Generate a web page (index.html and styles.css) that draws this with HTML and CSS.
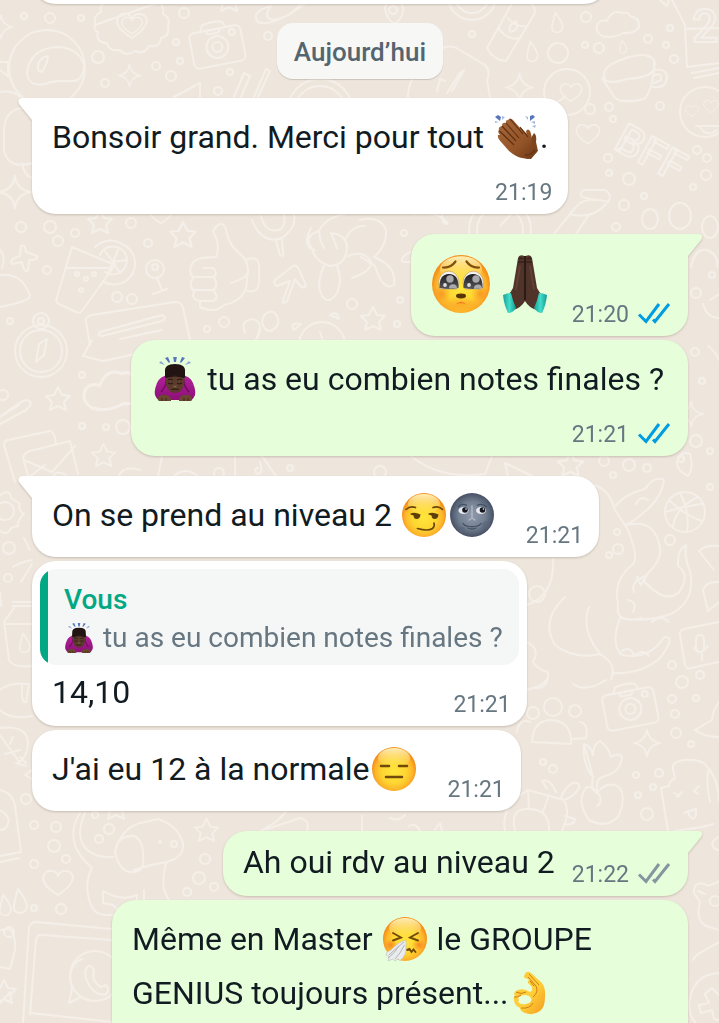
FILE: index.html
```html
<!DOCTYPE html>
<html lang="fr">
<head>
<meta charset="utf-8">
<meta name="viewport" content="width=device-width, initial-scale=1">
<title>Discussion</title>
<link rel="stylesheet" href="styles.css">
</head>
<body>
<svg class="sprite" aria-hidden="true">
  <defs>
    <radialGradient id="gFace" cx=".5" cy=".55" r=".5">
      <stop offset="0" stop-color="#ffe63d"/><stop offset=".55" stop-color="#fed631"/><stop offset=".85" stop-color="#fdb52a"/><stop offset="1" stop-color="#f4911c"/>
    </radialGradient>
    <linearGradient id="gShine" x1="0" y1="0" x2="0" y2="1">
      <stop offset="0" stop-color="#fff6c4" stop-opacity=".95"/><stop offset="1" stop-color="#ffe870" stop-opacity="0"/>
    </linearGradient>
    <radialGradient id="gMoon" cx=".5" cy=".5" r=".5">
      <stop offset="0" stop-color="#909bac"/><stop offset=".6" stop-color="#748193"/><stop offset="1" stop-color="#465064"/>
    </radialGradient>
    <radialGradient id="gBlush"><stop offset="0" stop-color="#f5741c" stop-opacity=".75"/><stop offset="1" stop-color="#f5741c" stop-opacity="0"/></radialGradient>
    <linearGradient id="gHand" x1="0" y1="0" x2="1" y2="1"><stop offset="0" stop-color="#ffc83b"/><stop offset=".55" stop-color="#ffcf3a"/><stop offset="1" stop-color="#f39a1c"/></linearGradient>
    <linearGradient id="gClap" x1="0" y1="0" x2="1" y2="1"><stop offset="0" stop-color="#a5673a"/><stop offset=".6" stop-color="#945428"/><stop offset="1" stop-color="#6b3614"/></linearGradient>
    <linearGradient id="gCuff" x1="0" y1="0" x2="1" y2="0"><stop offset="0" stop-color="#17a196"/><stop offset=".5" stop-color="#43dccb"/><stop offset="1" stop-color="#129b90"/></linearGradient>
    <linearGradient id="gEye" x1="0" y1="0" x2="0" y2="1"><stop offset="0" stop-color="#1e1c1d"/><stop offset="1" stop-color="#57565a"/></linearGradient>
    <linearGradient id="gShirt" x1="0" y1="0" x2="0" y2="1"><stop offset="0" stop-color="#b3219b"/><stop offset="1" stop-color="#8c1078"/></linearGradient>
  </defs>

  <symbol id="e-base" viewBox="0 0 44 44">
    <circle cx="22" cy="22" r="22" fill="url(#gFace)"/>
    <ellipse cx="22" cy="11" rx="16" ry="10" fill="url(#gShine)"/>
  </symbol>

  <symbol id="e-smirk" viewBox="0 0 44 44">
    <use href="#e-base" width="44" height="44"/>
    <g fill="none" stroke="#6a4608" stroke-width="1.7" stroke-linecap="round">
      <path d="M4 16.5Q8 12.500 13.500 14.500M31 14.500Q36.500 12.500 40.500 16.500"/>
      <path d="M15.500 35.500Q26 38.500 30.500 35.500Q33 33.500 32 30"/>
    </g>
    <g fill="#5d3f0a"><path d="M8.500 20.500Q13 18.800 18.500 21.500Q18 26 14.500 26Q12 26 11.500 22.500Q10 22 8.500 21.500Z"/><path d="M26.500 20.500Q31 18.800 36.500 21.500Q36 26 32.500 26Q30 26 29.500 22.500Q28 22 26.500 21.500Z"/></g>
  </symbol>

  <symbol id="e-moon" viewBox="0 0 44 44">
    <circle cx="22" cy="22" r="22" fill="url(#gMoon)"/>
    <g fill="#5a667a" opacity=".55"><circle cx="9" cy="11" r="3"/><circle cx="34" cy="8" r="2.500"/><circle cx="36" cy="32" r="4"/><circle cx="12" cy="37" r="3"/></g>
    <path d="M8 14Q12 9.500 17 12.500M27 12.500Q32 9.500 37 14" fill="none" stroke="#435064" stroke-width="1.300"/>
    <ellipse cx="13.500" cy="17.500" rx="5" ry="3.500" fill="#e6eaef"/><ellipse cx="31" cy="17.500" rx="5" ry="3.500" fill="#e6eaef"/>
    <circle cx="15" cy="17" r="2.800" fill="#141720"/><circle cx="32.500" cy="17" r="2.800" fill="#141720"/>
    <circle cx="16" cy="16" r=".8" fill="#fff"/><circle cx="33.500" cy="16" r=".8" fill="#fff"/>
    <path d="M22 13V25M19 27Q22 24 25 27" fill="none" stroke="#b4bdca" stroke-width="1.600" stroke-linecap="round" opacity=".8"/>
    <path d="M13 30.500Q15 33 17 33Q22 34.500 27 33Q29 33 31 30.500M18 35Q22 37 26 35" fill="none" stroke="#465266" stroke-width="1.300" stroke-linecap="round"/>
  </symbol>

  <symbol id="e-flat" viewBox="0 0 44 44">
    <use href="#e-base" width="44" height="44"/>
    <path d="M9 19H17M27 19H35M14 30H30" fill="none" stroke="#70490b" stroke-width="2.600" stroke-linecap="round"/>
  </symbol>

  <symbol id="e-sneeze" viewBox="0 0 44 44">
    <use href="#e-base" width="44" height="44"/>
    <ellipse cx="36" cy="28" rx="7" ry="6" fill="url(#gBlush)"/><ellipse cx="8" cy="28" rx="7" ry="6" fill="url(#gBlush)"/>
    <path d="M10 16L18 20.500L10 23.500M35 16L27 20.500L35 23.500M24 33L26.500 32L28.500 35L30.500 32.500L32.500 35" fill="none" stroke="#70490b" stroke-width="1.900" stroke-linecap="round"/>
    <path d="M22.500 23Q23.500 25 23 30Q24 38 17 43.500L15 42L12 44L10 42L5 44L6 40L3 38L4 35Q8 34 11 30Q16 25 22.500 23Z" fill="#e9ebec" stroke="#bcbfc1" stroke-width=".6"/>
    <path d="M21 25Q13 31 6 38M21.500 28Q17 37 12 42M16 29Q12 36 5 41" fill="none" stroke="#b3b6b8" stroke-width="1"/>
  </symbol>

  <symbol id="e-plead" viewBox="0 0 60 60">
    <use href="#e-base" x="1" y="1" width="58" height="58"/>
    <ellipse cx="30" cy="50" rx="23" ry="8" fill="url(#gBlush)" opacity=".5"/><ellipse cx="11" cy="40" rx="9" ry="9" fill="url(#gBlush)" opacity=".7"/><ellipse cx="49" cy="40" rx="9" ry="9" fill="url(#gBlush)" opacity=".7"/>
    <path d="M12 13.500Q20 14 24.500 7.500M35.500 7.500Q40 14 48 13.500" fill="none" stroke="#80510c" stroke-width="2.200" stroke-linecap="round"/>
    <path d="M7.500 28A10.300 12 0 0 1 28 28Q28 32 25.500 35H9Q7.500 32 7.500 28Z" fill="#f2f1f3" stroke="#b99a5e" stroke-width=".6"/>
    <path d="M32 28A10.300 12 0 0 1 52.500 28Q52.500 32 51 35H34.500Q32 33 32 28Z" fill="#f2f1f3" stroke="#b99a5e" stroke-width=".6"/>
    <path d="M8.500 34Q8 20 18 20Q28 20 27.500 34Q18 36 8.500 34Z" fill="url(#gEye)"/><path d="M32.500 34Q32 20 42 20Q52 20 51.500 34Q42 36 32.500 34Z" fill="url(#gEye)"/>
    <g fill="#a9a9ad"><circle cx="19" cy="25" r="3.700"/><circle cx="45" cy="25" r="3.700"/><path d="M18 34.500A4 4 0 0 1 26 34ZM43 35A4 4 0 0 1 51 34Z"/></g>
    <circle cx="14" cy="31" r="1.900" fill="#ddd"/><circle cx="38" cy="31" r="1.900" fill="#ddd"/>
    <ellipse cx="30" cy="42" rx="5" ry="2.400" fill="#593504"/><path d="M24.500 50.500Q30 45 35.500 50.500Q30 48 24.500 50.500Z" fill="#f07820"/>
  </symbol>

  <symbol id="e-pray" viewBox="0 0 60 60">
    <path d="M29.500 2Q24 0 23 4L18 34Q16 38 13 41L18 56Q26 54 30 47Q34 54 42 56L47 41Q44 38 42 34L37 4Q36 0 30.500 2Z" fill="#50342a"/>
    <path d="M24 5Q26 3 28 5M32 5Q34 3 36 5M23 8H29M31 8H37" stroke="#2b1914" stroke-width="1" fill="none"/>
    <path d="M30 2V46" stroke="#24140f" stroke-width="1.600" fill="none"/>
    <path d="M25 12L21 36M35 12L39 36" stroke="#6b4a3a" stroke-width="2" opacity=".6"/>
    <path d="M8 41Q12 39 16 39Q18 48 21 54Q18 59 13 59Q9 51 8 41Z" fill="url(#gCuff)"/><path d="M52 41Q48 39 44 39Q42 48 39 54Q42 59 47 59Q51 51 52 41Z" fill="url(#gCuff)"/>
  </symbol>

  <symbol id="e-clap" viewBox="0 0 44 44">
    <path d="M24 16Q24 12 27 13L37 23L40 18Q43 20 42 27L44 36L34 44Q28 43 22 37Z" fill="#7d451e"/>
    <path d="M5 15Q3 17 6 20L4 20Q3 23 8 28L15 36Q22 42 28 43L37 44L43 37L38 29Q38 20 36 16Q34 13 32 16L33 21L19 5Q16 2 14 5Q11 5 12 8Q8 7 8 11Q4 12 5 15Z" fill="url(#gClap)"/>
    <path d="M12 8L25 23M8 11L22 26M5.500 16L20 30M16 4L29 19M26 12L34 22M31 40Q36 41 41 35" fill="none" stroke="#5e2f10" stroke-width="1.100"/>
    <path d="M1 1L6 5L7 1L4-1ZM41 1L36 5L36 0L39-1Z" fill="#5876bd" transform="translate(0 1)"/>
    <path d="M8 1L8 5L11 2ZM1 8L5 7L1 6ZM31 1L34 5L34 2ZM37 7L41 9L41 6ZM38 11L41 13L42 10Z" fill="#a7b9df"/>
  </symbol>

  <symbol id="e-bow" viewBox="0 0 44 44">
    <path d="M3 40Q0 36 4 26Q7 19 15 18H29Q37 19 40 26Q44 36 41 40Q39 44 35 43H9Q5 44 3 40Z" fill="url(#gShirt)"/>
    <path d="M8 35Q14 28 13 23M36 35Q30 28 31 23" stroke="#74095f" stroke-width="1.500" fill="none"/>
    <path d="M12 15Q11 7 22 7Q33 7 32 15V21H12Z" fill="#211412"/>
    <path d="M12.500 20Q22 17 31.500 20Q32 35 22 36Q12 35 12.500 20Z" fill="#5b3b2b"/>
    <path d="M12 17Q22 20 32 17L31 21Q22 18 13 21Z" fill="#211412"/>
    <path d="M15 22.500Q18 21.500 20 23M24 23Q26 21.500 29 22.500M15 26Q18 28 20 26M24 26Q26 28 29 26M18.500 32.500Q22 31.500 25.500 32.500" stroke="#26130e" stroke-width="1" fill="none"/>
    <path d="M20.500 29.500H23.500" stroke="#8a624c" stroke-width="1.500"/>
    <path d="M5 43V41Q7 37 12 38Q17 38 18 42V44H6ZM39 43V41Q37 37 32 38Q27 38 26 42V44H38Z" fill="#6b4630"/>
    <path d="M9 41V44M13 41V44M31 41V44M35 41V44" stroke="#38211a" stroke-width=".8"/>
    <path d="M20-1H24L23 5H21ZM12 1L15 0L17 5L16 6ZM32 1L29 0L27 5L28 6Z" fill="#5575bd"/><path d="M6 6L8 4L12 8ZM38 6L36 4L32 8Z" fill="#8fa6d6"/>
  </symbol>

  <symbol id="e-ok" viewBox="0 0 44 44">
    <path d="M14 3Q16-1 20 2L30 11Q35 16 34 26Q34 36 29 40Q22 45 14 42Q9 40 9 37Q3 34 3 29Q2 27 4 25Q2 22 5 20Q9 17 15 19L19 21Q22 20 21 16L17 12Q16 9 19 9L14 7Q12 6 14 3Z" fill="url(#gHand)"/>
    <path d="M7 27Q12 22 18 25Q23 29 18 32Q11 35 7 31Q9 29 7 27Z" fill="#e6ffda"/>
    <path d="M17 6L25 15Q28 21 22 26M19 10L23 15M18 3L28 14M3 26Q6 27 10 24M5 21Q10 24 15 21M10 37Q19 38 22 32" fill="none" stroke="#cf7f11" stroke-width="1"/>
  </symbol>

  <symbol id="i-checks" viewBox="0 2 34 22" overflow="visible">
    <path d="M2 12.500L9 19.500L22 2M16 17.500L18 19.500L32 2" fill="none" stroke="currentColor" stroke-width="3"/>
  </symbol>

  <symbol id="d-star" viewBox="-14 -14 28 28"><path d="M0-12L4-4L12-3L6 3L8 11L0 7L-8 11L-6 3L-12-3L-4-4Z"/></symbol>
  <symbol id="d-spark" viewBox="-18 -18 36 36"><path d="M0-16Q2-2 16 0Q2 2 0 16Q-2 2-16 0Q-2-2 0-16Z"/></symbol>
  <symbol id="d-heart" viewBox="-18 -16 36 32"><path d="M0 13Q-15 4-15-4Q-13-13-5-11Q-1-10 0-6Q1-10 6-11Q14-12 15-4Q14 4 0 13Z"/></symbol>
  <symbol id="d-drop" viewBox="-8 -14 16 28"><path d="M-2-12Q7 0 7 5Q6 12 0 12Q-7 12-6 4Q-5-2-2-12Z"/></symbol>
  <symbol id="d-camera" viewBox="-30 -26 60 52"><g transform="rotate(-11)"><rect x="-26" y="-16" width="52" height="36" rx="5"/><path d="M-14-16L-11-22Q0-25 9-22L12-16"/><circle cy="2" r="11"/><circle cy="2" r="5"/><rect x="-8" y="-16" width="13" height="4" rx="2"/><circle cx="17" cy="-10" r="3"/></g></symbol>
  <symbol id="d-cloud" viewBox="-24 -16 48 32"><path d="M-16 12Q-24 7-20-1Q-16-5-11-3Q-6-15 4-11Q10-13 12-8Q22-6 21 3Q17 10 5 9Q-5 15-16 12Z"/></symbol>
</svg>

<main class="chat">
  <svg class="doodles" viewBox="0 0 719 1023" preserveAspectRatio="xMidYMin slice" aria-hidden="true">
    <!-- scattered dots -->
    <g>
      <circle cx="24" cy="16" r="3"/><circle cx="50" cy="18" r="5"/><circle cx="81" cy="18" r="3"/><circle cx="184" cy="13" r="5"/><circle cx="98" cy="57" r="6"/><circle cx="156" cy="66" r="4"/><circle cx="171" cy="76" r="5"/><circle cx="105" cy="83" r="4"/><circle cx="176" cy="42" r="3"/><circle cx="180" cy="61" r="3"/><circle cx="230" cy="72" r="3"/><circle cx="218" cy="91" r="4"/><circle cx="268" cy="36" r="4"/>
      <circle cx="21" cy="227" r="5"/><circle cx="50" cy="227" r="6"/><circle cx="75" cy="233" r="4"/><circle cx="58" cy="241" r="5"/><circle cx="131" cy="223" r="5"/><circle cx="148" cy="243" r="4"/><circle cx="47" cy="270" r="4"/><circle cx="117" cy="297" r="5"/><circle cx="132" cy="299" r="5"/><circle cx="207" cy="329" r="3"/><circle cx="224" cy="322" r="5"/><circle cx="352" cy="304" r="5"/><circle cx="10" cy="321" r="3"/>
      <circle cx="472" cy="34" r="3"/><circle cx="586" cy="17" r="5"/><circle cx="585" cy="45" r="3"/><circle cx="599" cy="48" r="5"/><circle cx="558" cy="53" r="10"/><circle cx="648" cy="39" r="4"/><circle cx="670" cy="28" r="3"/><circle cx="666" cy="45" r="3"/><circle cx="674" cy="59" r="4"/><circle cx="590" cy="109" r="5"/><circle cx="609" cy="107" r="4"/><circle cx="613" cy="119" r="3"/><circle cx="660" cy="106" r="4"/><circle cx="608" cy="158" r="4"/><circle cx="609" cy="173" r="3"/><circle cx="629" cy="179" r="6"/><circle cx="697" cy="150" r="4"/><circle cx="707" cy="158" r="4"/><circle cx="706" cy="175" r="5"/><circle cx="693" cy="187" r="3"/><circle cx="644" cy="196" r="3"/><circle cx="624" cy="205" r="5"/><circle cx="616" cy="227" r="4"/><circle cx="404" cy="233" r="3"/><circle cx="400" cy="300" r="3"/><circle cx="397" cy="324" r="3"/><circle cx="696" cy="293" r="5"/><circle cx="712" cy="275" r="3"/>
      <circle cx="82" cy="375" r="3"/><circle cx="3" cy="395" r="5"/><circle cx="82" cy="426" r="3"/><circle cx="106" cy="427" r="3"/><circle cx="123" cy="427" r="7"/><circle cx="9" cy="548" r="6"/><circle cx="8" cy="578" r="4"/><circle cx="219" cy="473" r="5"/><circle cx="290" cy="468" r="3"/><circle cx="380" cy="472" r="6"/>
      <circle cx="695" cy="352" r="4"/><circle cx="702" cy="381" r="3"/><circle cx="696" cy="441" r="6"/><circle cx="710" cy="451" r="3"/><circle cx="604" cy="461" r="5"/><circle cx="629" cy="465" r="6"/><circle cx="647" cy="468" r="4"/><circle cx="613" cy="475" r="3"/><circle cx="710" cy="487" r="3"/><circle cx="670" cy="540" r="5"/><circle cx="617" cy="532" r="3"/><circle cx="618" cy="549" r="5"/><circle cx="609" cy="555" r="3"/><circle cx="672" cy="665" r="4"/><circle cx="700" cy="675" r="4"/>
      <circle cx="26" cy="799" r="5"/><circle cx="34" cy="825" r="4"/><circle cx="56" cy="827" r="5"/><circle cx="54" cy="846" r="6"/><circle cx="66" cy="859" r="4"/><circle cx="34" cy="864" r="4"/><circle cx="95" cy="815" r="3"/><circle cx="109" cy="829" r="5"/><circle cx="99" cy="839" r="4"/><circle cx="205" cy="859" r="5"/><circle cx="199" cy="878" r="6"/><circle cx="214" cy="887" r="4"/><circle cx="187" cy="892" r="4"/><circle cx="34" cy="908" r="3"/><circle cx="61" cy="909" r="5"/>
      <circle cx="682" cy="682" r="6"/><circle cx="672" cy="699" r="4"/><circle cx="696" cy="698" r="3"/><circle cx="675" cy="714" r="4"/><circle cx="676" cy="733" r="5"/><circle cx="691" cy="744" r="3"/><circle cx="543" cy="762" r="3"/><circle cx="553" cy="769" r="4"/><circle cx="636" cy="775" r="3"/><circle cx="659" cy="773" r="4"/><circle cx="653" cy="787" r="3"/><circle cx="638" cy="795" r="3"/><circle cx="647" cy="814" r="6"/>
    </g>
    <!-- repeated motifs -->
    <use href="#d-star" x="86" y="208" width="28" height="28"/><use href="#d-star" x="168" y="220" width="30" height="30"/><use href="#d-star" x="44" y="385" width="28" height="28"/><use href="#d-star" x="90" y="442" width="27" height="27"/><use href="#d-star" x="556" y="450" width="29" height="29"/><use href="#d-star" x="359" y="305" width="28" height="28"/><use href="#d-star" x="193" y="817" width="27" height="27"/><use href="#d-star" x="-10" y="978" width="28" height="28"/><use href="#d-star" x="215" y="-14" width="28" height="28"/><use href="#d-star" x="102" y="794" width="28" height="28"/>
    <use href="#d-spark" x="117" y="63" width="25" height="25"/><use href="#d-spark" x="-3" y="174" width="36" height="36"/><use href="#d-spark" x="-12" y="14" width="26" height="26"/><use href="#d-spark" x="504" y="72" width="31" height="31"/><use href="#d-spark" x="632" y="728" width="30" height="30"/><use href="#d-spark" x="677" y="400" width="28" height="28"/>
    <use href="#d-heart" x="114" y="9" width="36" height="32"/><use href="#d-heart" x="119" y="14" width="26" height="22"/><use href="#d-heart" x="40" y="866" width="36" height="32"/><use href="#d-heart" x="574" y="121" width="28" height="25"/><use href="#d-heart" x="558" y="80" width="26" height="24"/><use href="#d-heart" x="145" y="198" width="32" height="28"/><use href="#d-heart" x="684" y="103" width="16" height="15"/><use href="#d-heart" x="702" y="98" width="18" height="16"/>
    <use href="#d-drop" x="550" y="11" width="14" height="23"/><use href="#d-drop" x="525" y="40" width="14" height="23"/><use href="#d-drop" x="618" y="39" width="10" height="15"/><use href="#d-drop" x="12" y="887" width="16" height="28"/><use href="#d-drop" x="-2" y="893" width="14" height="24"/><use href="#d-drop" x="18" y="632" width="13" height="22"/>
    <use href="#d-camera" x="187" y="19" width="60" height="52"/><use href="#d-camera" x="600" y="681" width="60" height="52"/>
    <use href="#d-cloud" x="594" y="8" width="48" height="32"/><use href="#d-cloud" x="80" y="360" width="72" height="60"/>
    <!-- top left -->
    <circle cx="47" cy="68" r="38"/><path d="M27 73Q30 48 58 47Q78 48 84 64Q84 82 70 81Q55 80 45 84Q28 87 27 73ZM38 70Q37 58 48 56Q48 62 42 72ZM0 92Q14 90 20 97M32 108Q5 105 4 130V150Q8 170 32 163M22 163Q24 176 32 178M0 62L8 62V76L0 70"/>
    <path d="M95 25Q93 15 101 12Q99 3 108 2M160 2Q164 7 163 14Q171 18 168 27Q170 36 161 38Q160 48 149 46Q144 55 135 51Q126 57 120 50Q109 52 107 43Q95 42 98 32Q93 30 95 25Z"/>
    <path d="M258 22Q250 12 271 6Q262 18 273 20Q295 16 302 0M258 22Q272 28 306 3M174 97L200 83V97M234 97L244 73L250 76L241 97M254 97L266 69L270 71L258 97"/>
    <circle cx="320" cy="112" r="33"/><circle cx="320" cy="112" r="26"/>
    <!-- second band, left -->
    <path d="M72 247L115 265L82 311Q80 314 76 312L57 303Q56 300 57 297ZM67 268H108M95 247Q108 235 124 245A21 21 0 0 1 104 282M100 255A14 14 0 1 1 105 272M113 262L105 251M113 262L118 250M113 262L126 260M113 262L120 273M113 262L108 274"/><circle cx="77" cy="274" r="2"/><circle cx="86" cy="279" r="2"/><circle cx="94" cy="274" r="2"/><circle cx="81" cy="290" r="2"/>
    <circle cx="155" cy="269" r="9"/><circle cx="155" cy="267" r="3"/><path d="M157 278L162 290M153 294L167 289M21 246Q25 243 26 252L37 256Q39 260 29 260L28 270Q24 274 22 262L12 264Q9 259 20 256ZM0 275Q22 272 30 296Q30 301 0 307M0 250Q6 256 2 268"/>
    <path d="M215 228Q223 219 226 230Q229 245 238 252Q251 262 247 278Q248 300 224 305Q215 314 200 307V301Q191 300 194 291Q188 286 193 278Q188 272 192 264Q195 257 216 257Q221 244 213 232ZM203 268H213Q219 274 213 277H194M214 277Q219 287 213 290H195M213 290Q220 298 213 301H201M231 283Q246 278 247 274M246 260Q258 255 259 265V282Q258 295 245 290"/>
    <path d="M252 220Q262 245 282 238Q297 228 294 214M261 216Q266 235 281 229Q286 223 284 214M276 241L280 255Q285 258 283 252L282 240M275 280L293 266Q297 264 299 270L306 285Q304 292 295 279L287 301Q282 305 283 300L290 281L277 286Q273 284 275 280Z"/>
    <path d="M319 231Q326 217 345 214M319 231Q303 236 312 248Q314 261 330 266Q347 265 347 246Q345 234 331 233M319 231Q320 242 324 248M331 233L337 248M324 266Q315 285 323 297Q329 305 337 293Q343 280 337 266M311 228Q301 247 315 250M348 256Q362 250 370 260Q375 270 352 278M345 240Q352 225 365 226"/>
    <path d="M86 322Q84 317 92 315L175 302Q182 302 183 308L190 340M86 322L90 345M100 332L162 315Q168 318 162 321L102 336Q97 336 100 332ZM120 339L162 330M245 333Q240 321 252 319Q264 321 258 337M262 322Q264 310 274 312Q284 324 271 331Q264 331 262 322Z"/><path d="M250 347Q258 340 260 328"/>
    <circle cx="322" cy="345" r="23"/><path d="M320 332L324 345M294 330Q289 322 301 324ZM330 315Q337 310 339 319Z"/>
    <circle cx="41" cy="351" r="26"/><circle cx="41" cy="351" r="21"/><circle cx="41" cy="321" r="8"/><circle cx="41" cy="321" r="3"/><path d="M36 362L39 344L47 339L44 355Z"/>
    <!-- top right -->
    <path d="M385 8Q386 0 394 0Q404 1 403 11Q402 20 394 24Q386 18 385 8Z"/><circle cx="393" cy="10" r="4"/><circle cx="472" cy="-4" r="24"/><circle cx="472" cy="-4" r="17"/>
    <path d="M514 0L487 48Q493 60 506 61L535 13Q535 3 526 2M499 29Q508 41 521 38M508 18Q516 28 528 26M510 32Q508 25 516 21Q520 30 510 32ZM442 48Q452 44 460 50L485 65Q491 72 487 80L490 97M408 97Q409 75 420 76M437 91L440 79L445 81M452 91L464 70L460 73L447 93"/>
    <circle cx="567" cy="92" r="23"/><path d="M544 106Q560 103 565 96M604 76Q603 66 621 60Q646 50 654 60V66Q656 77 627 79Q604 86 604 76ZM602 78L615 98Q622 104 644 99Q652 93 655 62M654 70Q667 67 667 79Q665 89 653 87M655 75Q662 72 661 80L654 83M672 0L685 25L687 67L719 63M685 29L719 28M692 73L719 68M694 78L719 73"/>
    <text class="doodle-letter" x="692" y="42" font-size="46">2</text><text class="doodle-letter" transform="translate(612 148) rotate(29)" font-size="42">BFF</text>
    <circle cx="705" cy="112" r="25"/><path d="M696 126H719M700 127Q707 138 717 130M660 0L667 6L669 0"/>
    <circle cx="500" cy="230" r="31"/><circle cx="500" cy="230" r="23"/><path d="M500 226L512 213M570 214Q592 220 606 204M554 234L575 208Q585 195 608 202Q613 195 605 190H584Q579 192 582 197L595 200M576 234L588 216M414 214Q439 210 448 224Q442 225 442 214"/>
    <ellipse cx="650" cy="219" rx="8" ry="10"/><ellipse cx="680" cy="216" rx="11" ry="13"/><ellipse cx="710" cy="227" rx="8" ry="11"/><path d="M691 267Q695 248 707 250Q719 255 717 267M360 220Q380 215 386 230Q387 246 374 257Q397 266 394 285Q383 292 375 266L361 257M410 252Q398 259 403 262H410M710 300L719 294M703 304Q707 318 719 318"/>
    <!-- middle left -->
    <path d="M92 340L83 356L103 361L135 354M0 424L26 410Q35 402 27 400Q22 400 0 417M0 417L19 405M15 482L4 445Q4 441 8 440L50 431Q55 432 56 444M28 476L23 458Q24 453 30 451L70 441L78 474M24 460L52 472L75 446M29 477L45 465M52 480Q55 468 66 475M119 475Q125 465 140 470M158 476L162 456M173 477Q185 465 199 477M235 476V456M262 456L276 476M258 468Q253 468 257 474Q264 474 260 462M411 456Q440 480 485 474L492 456M508 476L505 463L532 476"/>
    <path d="M0 495Q10 488 11 498L20 504Q17 509 24 514Q17 520 18 526L11 528Q8 536 0 531"/><circle cx="5" cy="511" r="9"/><path d="M24 538L30 550M0 592L1 606M13 567Q18 563 32 560M21 582L32 564M13 602H32M13 606H32M14 608L4 622L9 660Q12 668 32 666M5 624H32"/>
    <!-- middle right -->
    <path d="M708 346Q716 352 719 360M594 485Q610 490 615 510L628 530Q640 560 632 565Q613 580 618 604Q615 625 642 618M616 505Q627 493 645 489Q654 475 664 480Q662 495 650 507Q634 522 625 525M627 525Q655 518 660 548Q662 560 648 573L641 585Q635 575 638 577M643 580Q665 605 679 592Q691 575 678 566Q677 550 686 545Q684 558 690 571Q696 601 671 614Q645 623 620 618Q610 645 622 655Q650 660 664 637Q677 636 660 658Q640 675 612 673M565 597Q540 620 555 645Q575 660 600 654Q618 664 611 679M527 605Q555 595 553 559M589 607Q580 630 601 655M526 642Q541 648 533 662Q538 670 548 672Q549 690 532 688"/>
    <circle cx="685" cy="512" r="20"/><path d="M665 512Q690 505 703 504M680 493Q690 510 687 532M670 501Q686 516 702 521M698 497Q675 508 673 527M677 462Q680 450 690 454Q694 468 688 476Q676 470 677 462ZM699 551Q705 545 719 546M699 551L714 570M703 590Q706 581 719 582M703 590L708 611L719 602"/><circle cx="681" cy="459" r="3"/><circle cx="537" cy="594" r="8"/><path d="M636 504Q640 495 648 500M645 576Q630 582 634 592M628 600Q638 602 633 612M652 622Q660 614 669 622M622 651Q630 645 634 656Q643 648 649 656"/>
    <path d="M719 622L684 629Q679 631 680 635L685 665Q687 670 691 668L719 662"/><rect x="696" y="635" width="8" height="17" rx="4"/><path d="M694 648Q700 657 708 646M702 654V660"/>
    <!-- bottom left -->
    <path d="M0 690Q10 682 27 684M22 685Q21 704 26 702L29 684M0 710Q10 720 32 716M0 728Q27 725 28 742Q28 758 16 763L26 766M0 735L20 763M5 754L20 750M10 744L13 737M20 757L26 763M32 770L25 775L32 779M0 790Q13 793 15 806L21 852L0 856M0 810Q14 818 5 829L0 830M0 862L19 858M80 813Q69 830 76 848Q80 857 92 868Q83 885 91 905Q94 914 105 915H115Q120 910 113 905L103 903V891Q122 902 137 895M85 813Q77 830 82 843Q90 858 113 857M115 852Q122 825 145 822L158 819Q179 826 183 844Q184 858 166 862Q145 866 134 870M115 852Q117 835 134 836Q145 841 143 864Q141 872 134 872Q120 874 115 852ZM166 863Q162 878 164 890L170 903M137 895V904M144 890V905"/><circle cx="160" cy="842" r="1"/><circle cx="174" cy="844" r="3"/>
    <path d="M23 1023L29 927Q31 922 36 922L112 929M30 1014L36 940Q37 934 42 935L112 940M31 1013L112 1022M0 1003L10 992M0 930L10 929Q16 935 15 950L10 969L0 967M250 838L277 821L286 812M267 829L300 818Q310 820 307 830"/><circle cx="9" cy="932" r="5"/><circle cx="95" cy="976" r="25"/><path d="M81 997L69 1003L72 989Q66 965 82 959M87 967Q91 964 94 970L93 976Q95 984 101 987L106 985Q111 990 105 995Q91 994 86 978Q84 972 87 967Z"/>
    <!-- bottom right -->
    <circle cx="553" cy="707" r="9"/><circle cx="533" cy="713" r="6"/><circle cx="575" cy="711" r="6"/><path d="M532 742Q533 720 551 720Q572 721 571 744ZM517 732Q519 718 530 722M580 722Q589 724 586 738L573 739M527 690Q544 685 546 680M573 684Q586 693 606 680M719 702Q713 710 712 720L695 730Q704 737 719 737"/>
    <path d="M584 744Q591 746 593 755Q593 744 600 741Q609 748 611 757Q619 752 622 757Q621 772 605 776Q597 778 597 784V793M593 777Q582 764 584 744ZM593 777Q590 790 597 793Q607 780 619 787Q627 798 618 817Q606 829 589 820Q575 800 587 787Q594 786 600 796Q602 803 597 806M505 831Q500 806 528 790L564 800Q571 812 562 831M515 830Q510 810 526 809Q550 808 549 831M528 790L529 809M549 795L543 812M561 798Q563 790 571 784Q580 780 579 788Q574 797 564 800M547 789L542 781Q550 778 556 792M565 816L575 819Q574 826 564 824"/>
    <path d="M668 831L661 788L669 786Q670 779 675 779L673 769Q671 762 684 760Q702 758 708 768Q719 781 719 802M675 831Q705 827 713 824M708 772Q706 785 710 802M682 792L677 797M674 793L679 796M699 786L694 791L698 794M684 813L696 809V815Q693 822 689 815L688 811"/>
    <path d="M719 881Q707 888 705 884Q693 881 694 893L700 902Q695 920 706 926L719 930M698 891L705 894M719 942L705 950Q695 955 693 960M719 973Q692 974 689 1005Q690 1018 696 1023M719 995L712 988L705 994L709 1003L699 1005L701 1013L712 1010L714 1019L719 1020"/><circle cx="715" cy="901" r="5"/><path d="M719 837Q710 841 713 847Q717 851 719 850M420 831Q416 822 409 826M434 831L440 823L442 831M362 831V816M390 818Q399 822 405 815"/>
  </svg>

  <div class="bubble bubble--in bubble--previous"></div>

  <div class="day">Aujourd’hui</div>

  <article class="bubble bubble--in bubble--tail bubble--stack">
    <p class="text text--emoji">Bonsoir grand. Merci pour tout <svg class="emoji" role="img" aria-label="👏🏾"><use href="#e-clap"/></svg>.</p>
    <div class="meta"><time>21:19</time></div>
  </article>

  <article class="bubble bubble--out bubble--tail">
    <p class="text text--large"><svg class="emoji-large" role="img" aria-label="🥺"><use href="#e-plead"/></svg><svg class="emoji-large" role="img" aria-label="🙏🏿"><use href="#e-pray"/></svg></p>
    <div class="meta"><time>21:20</time><svg class="checks checks--read" role="img" aria-label="Lu"><use href="#i-checks"/></svg></div>
  </article>

  <article class="bubble bubble--out bubble--stack">
    <p class="text text--emoji"><svg class="emoji" role="img" aria-label="🙇🏿"><use href="#e-bow"/></svg> tu as eu combien notes finales ?</p>
    <div class="meta"><time>21:21</time><svg class="checks checks--read" role="img" aria-label="Lu"><use href="#i-checks"/></svg></div>
  </article>

  <article class="bubble bubble--in bubble--tail">
    <p class="text text--emoji">On se prend au niveau 2 <svg class="emoji" role="img" aria-label="😏"><use href="#e-smirk"/></svg><svg class="emoji" role="img" aria-label="🌚"><use href="#e-moon"/></svg></p>
    <div class="meta"><time>21:21</time></div>
  </article>

  <article class="bubble bubble--in bubble--reply">
    <blockquote class="quote">
      <p class="quote-author">Vous</p>
      <p class="quote-text"><svg class="emoji-small" role="img" aria-label="🙇🏿"><use href="#e-bow"/></svg> tu as eu combien notes finales ?</p>
    </blockquote>
    <div class="reply-row">
      <p class="text">14,10</p>
      <div class="meta"><time>21:21</time></div>
    </div>
  </article>

  <article class="bubble bubble--in">
    <p class="text text--emoji">J'ai eu 12 à la normale<svg class="emoji" role="img" aria-label="😑"><use href="#e-flat"/></svg></p>
    <div class="meta"><time>21:21</time></div>
  </article>

  <article class="bubble bubble--out bubble--tail">
    <p class="text">Ah oui rdv au niveau 2</p>
    <div class="meta"><time>21:22</time><svg class="checks" role="img" aria-label="Distribué"><use href="#i-checks"/></svg></div>
  </article>

  <article class="bubble bubble--out bubble--stack bubble--last">
    <p class="text text--emoji"><span>Même en Master </span><svg class="emoji" role="img" aria-label="🤧"><use href="#e-sneeze"/></svg><span> le GROUPE</span> <span>GENIUS toujours présent...</span><svg class="emoji" role="img" aria-label="👌"><use href="#e-ok"/></svg></p>
  </article>
</main>
</body>
</html>
```
FILE: styles.css
```css
* { box-sizing: border-box; }

body {
  margin: 0;
  font-family: Roboto, "Liberation Sans", sans-serif;
  color: #111b21;
}

p, blockquote { margin: 0; }

.sprite {
  position: absolute;
  width: 0;
  height: 0;
  overflow: hidden;
}

.chat {
  position: relative;
  isolation: isolate;
  display: flex;
  flex-direction: column;
  height: 100vh;
  overflow: hidden;
  padding: 0 31px 0 32px;
  background: #eee6dd;
}

.doodles {
  position: absolute;
  inset: 0;
  z-index: -1;
  width: 100%;
  height: 100%;
  fill: none;
  stroke: #f5efea;
  stroke-width: 2px;
  stroke-linecap: round;
  stroke-linejoin: round;
}

.doodle-letter { font-weight: 500; }

/* Bubbles */

.bubble {
  position: relative;
  flex: none;
  display: flex;
  align-items: flex-end;
  max-width: 576px;
  margin-top: 4px;
  padding: 12px 16px 7px 20px;
  border-radius: 24px;
  filter: drop-shadow(0 1px 1px rgba(80, 60, 40, 0.25));
}

.bubble--in {
  align-self: flex-start;
  gap: 26px;
  background: #fff;
}

.bubble--out {
  align-self: flex-end;
  gap: 13px;
  padding-right: 17px;
  background: #e6ffda;
}

.bubble--stack {
  flex-direction: column;
  gap: 7px;
}

.bubble--stack.bubble--out .text { margin-right: 7px; }

.bubble--previous {
  width: 576px;
  height: 64px;
  margin-top: -60px;
}

.bubble--last { padding-bottom: 64px; }

.bubble--tail { margin-top: 20px; }
.bubble--tail.bubble--in { border-top-left-radius: 0; }
.bubble--tail.bubble--out { border-top-right-radius: 0; }

.bubble--tail::before {
  content: "";
  position: absolute;
  top: 0;
  width: 16px;
  height: 22px;
  background: inherit;
}

.bubble--in::before {
  left: -14px;
  clip-path: path("M16 0H4Q-1 1 1 6L14 22H16Z");
}

.bubble--out::before {
  right: -15px;
  clip-path: path("M0 0H12Q17 1 14 6L1 22H0Z");
}

.day {
  flex: none;
  align-self: center;
  margin: 19px 0 -1px;
  padding: 11px 17px 9px;
  border-radius: 16px;
  background: #f7f7f6;
  color: #54656f;
  font-size: 26px;
  font-weight: 500;
  line-height: 36px;
  box-shadow: 0 1px 1px rgba(80, 60, 40, 0.2);
}

.text {
  margin: 0 4px 8px 0;
  font-size: 32px;
  line-height: 38px;
}

.text--emoji { line-height: 54px; }

.text--large {
  display: flex;
  align-items: center;
  gap: 4px;
  height: 75px;
}

.emoji {
  width: 44px;
  height: 44px;
  margin: 0 2px;
  vertical-align: -11px;
  overflow: visible;
}

.emoji-large { width: 60px; height: 60px; }

.emoji-small {
  width: 30px;
  height: 30px;
  margin-right: 2px;
  vertical-align: -6px;
}

.meta {
  display: flex;
  align-items: center;
  gap: 8px;
  color: #667781;
  font-size: 23px;
  line-height: 28px;
}

.checks {
  width: 34px;
  height: 22px;
  color: #8696a0;
  overflow: visible;
}

.checks--read { color: #009de2; }

/* Quoted reply */

.bubble--reply {
  flex-direction: column;
  align-items: stretch;
  gap: 8px;
  padding: 8px 8px 7px;
}

.quote {
  padding: 12px 16px 8px 24px;
  border-radius: 16px;
  background: linear-gradient(to right, #02a884 8px, #f5f6f6 8px);
  color: #667781;
  font-size: 28px;
  line-height: 38px;
}

.quote-author {
  color: #02a884;
  font-weight: 500;
}

.reply-row {
  display: flex;
  align-items: flex-end;
  justify-content: space-between;
  padding: 0 8px 0 12px;
}
```
